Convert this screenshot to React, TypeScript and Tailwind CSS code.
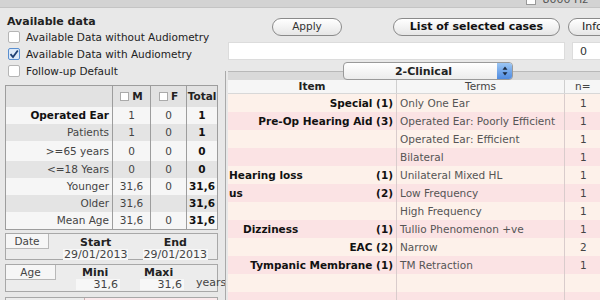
import React from "react";

const font = { fontFamily: '"DejaVu Sans", Verdana, sans-serif' };

function Check({ checked }: { checked?: boolean }) {
  return (
    <span
      className={`inline-flex w-[12px] h-[12px] rounded-[2px] border items-center justify-center shrink-0 ${
        checked ? "border-[#5a8fd0] bg-[#dce9f8]" : "border-[#b5b5b5] bg-white"
      }`}
    >
      {checked && (
        <svg width="10" height="10" viewBox="0 0 10 10">
          <path d="M1.5 5.2 L4 8 L8.8 1.5" fill="none" stroke="#1d3f73" strokeWidth="1.8" />
        </svg>
      )}
    </span>
  );
}

const stats = [
  { label: "Operated Ear", m: "1", f: "0", t: "1", bold: true, h: "h-[17px]" },
  { label: "Patients", m: "1", f: "0", t: "1", h: "h-[17px]" },
  { label: ">=65 years", m: "0", f: "0", t: "0", h: "h-[20px]" },
  { label: "<=18 Years", m: "0", f: "0", t: "0", h: "h-[17px]" },
  { label: "Younger", m: "31,6", f: "0", t: "31,6", h: "h-[17px]" },
  { label: "Older", m: "31,6", f: "", t: "31,6", h: "h-[17px]" },
  { label: "Mean Age", m: "31,6", f: "0", t: "31,6", h: "h-[17px]" },
];

type Row = { item: string; count?: string; mode?: "right" | "left" | "indent"; term: string; n: string };

const rows: Row[] = [
  { item: "Special", count: "(1)", mode: "right", term: "Only One Ear", n: "1" },
  { item: "Pre-Op Hearing Aid", count: "(3)", mode: "right", term: "Operated Ear: Poorly Efficient", n: "1" },
  { item: "", term: "Operated Ear: Efficient", n: "1" },
  { item: "", term: "Bilateral", n: "1" },
  { item: "Hearing loss", count: "(1)", mode: "left", term: "Unilateral Mixed HL", n: "1" },
  { item: "us", count: "(2)", mode: "left", term: "Low Frequency", n: "1" },
  { item: "", term: "High Frequency", n: "1" },
  { item: "Dizziness", count: "(1)", mode: "indent", term: "Tullio Phenomenon +ve", n: "1" },
  { item: "EAC", count: "(2)", mode: "right", term: "Narrow", n: "2" },
  { item: "Tympanic Membrane", count: "(1)", mode: "right", term: "TM Retraction", n: "1" },
  { item: "", term: "", n: "" },
  { item: "", term: "", n: "" },
];

const pill = "shrink-0 h-[18px] rounded-full border border-[#8a8a8a] bg-gradient-to-b from-white to-[#e6e6e6] shadow-[inset_0_1px_0_#fff] flex items-center";

export default function App() {
  return (
    <div className="w-[600px] h-[300px] overflow-hidden bg-[#e8e8e8] text-[10.5px] text-[#222] leading-none" style={font}>
      <div className="h-[8px] bg-[#d3d3d3] border-b border-[#c4c4c4] flex justify-end overflow-hidden pr-[12px]">
        <div className="flex items-start gap-[6px] text-[11px] text-[#555] mt-[-6px]">
          <span className="w-[10px] h-[10px] border border-[#999] bg-white mt-[1px]" />
          <span>8000 Hz</span>
        </div>
      </div>
      <div className="flex">
        {/* left column */}
        <div className="w-[222px] shrink-0 pl-[5px] pr-[4px]">
          <div className="font-bold text-[11px] pl-[2px] mt-[6px] h-[14px] flex items-center">Available data</div>
          <div className="flex flex-col gap-[5px] pl-[3px] mt-[3px]">
            <label className="flex items-center gap-[6px] h-[12px]"><Check />Available Data without Audiometry</label>
            <label className="flex items-center gap-[6px] h-[12px]"><Check checked />Available Data with Audiometry</label>
            <label className="flex items-center gap-[6px] h-[12px]"><Check />Follow-up Default</label>
          </div>

          <div className="mt-[8px] border border-[#9d9d9d] bg-white">
            <div className="grid grid-cols-[107px_38px_36px_1fr] h-[21px] bg-[#e2e2e2] font-bold items-center">
              <div className="h-full border-r border-[#9d9d9d]" />
              <div className="h-full border-r border-[#9d9d9d] flex items-center justify-center gap-[3px]"><span className="w-[9px] h-[9px] border border-[#aaa] bg-white" />M</div>
              <div className="h-full border-r border-[#9d9d9d] flex items-center justify-center gap-[3px]"><span className="w-[9px] h-[9px] border border-[#aaa] bg-white" />F</div>
              <div className="text-center">Total</div>
            </div>
            {stats.map((s, i) => (
              <div key={s.label} className={`grid grid-cols-[107px_38px_36px_1fr] ${s.h} items-center ${i % 2 ? "bg-[#e4e4e4]" : "bg-[#f6f6f6]"}`}>
                <div className={`h-full border-r border-[#9d9d9d] flex items-center justify-end pr-[3px] ${s.bold ? "font-bold text-[#111]" : "text-[#444]"}`}>{s.label}</div>
                <div className="h-full border-r border-[#9d9d9d] flex items-center justify-center text-[#444]">{s.m}</div>
                <div className="h-full border-r border-[#9d9d9d] flex items-center justify-center text-[#444]">{s.f}</div>
                <div className="text-center font-bold text-[#111]">{s.t}</div>
              </div>
            ))}
          </div>

          <div className="mt-[3px] border border-[#a8a8a8] bg-[#ececec] h-[27px] flex">
            <div className="w-[50px] shrink-0 flex flex-col">
              <div className="w-[43px] h-[15px] bg-[#f6f6f6] border-r border-b border-[#b8b8b8] flex items-center justify-center text-[#444]">Date</div>
            </div>
            <div className="flex-1 grid grid-cols-2 pt-[3px] pr-[2px]">
              <div className="flex flex-col items-center gap-[1px]">
                <span className="font-bold text-[11px]">Start</span>
                <span className="text-[#444] text-[11px] bg-[#f7f7f7] px-[1px]">29/01/2013</span>
              </div>
              <div className="flex flex-col items-center gap-[1px]">
                <span className="font-bold text-[11px]">End</span>
                <span className="text-[#444] text-[11px] bg-[#f7f7f7] px-[1px]">29/01/2013</span>
              </div>
            </div>
          </div>

          <div className="mt-[4px] border border-[#a8a8a8] bg-[#ececec] h-[28px] flex">
            <div className="w-[50px] shrink-0 flex flex-col">
              <div className="h-[15px] bg-[#f6f6f6] border-r border-b border-[#b8b8b8] flex items-center justify-center text-[#444]">Age</div>
            </div>
            <div className="flex-1 flex pt-[2px] text-[11px]">
              <div className="w-[70px] flex flex-col items-end pr-[6px] gap-[1px]">
                <span className="font-bold self-start pl-[26px]">Mini</span>
                <span className="text-[#444] bg-[#f7f7f7] pl-[18px] pr-[2px]">31,6</span>
              </div>
              <div className="w-[60px] flex flex-col items-end pr-[2px] gap-[1px]">
                <span className="font-bold self-start pl-[18px]">Maxi</span>
                <span className="text-[#444] bg-[#f7f7f7] pl-[18px] pr-[2px]">31,6</span>
              </div>
              <div className="flex items-end pb-[3px] pl-[10px] text-[#444]">years</div>
            </div>
          </div>

          <div className="mt-[5px] border border-[#a8a8a8] bg-[#ececec] h-[20px] flex">
            <div className="w-[78px]" />
            <div className="flex-1 bg-[#fbe9ec] border-l border-[#c8b0b0]" />
          </div>
        </div>

        {/* right column */}
        <div className="flex-1 min-w-0 overflow-hidden">
          <div className="flex items-center h-[34px] pt-[3px] whitespace-nowrap">
            <div className={`${pill} ml-[50px] w-[70px] justify-center text-[#333]`}>Apply</div>
            <div className={`${pill} ml-[51px] w-[167px] justify-center font-bold text-[#111] text-[11px]`}>List of selected cases</div>
            <div className={`${pill} ml-[8px] w-[60px] text-[11px] pl-[13px]`}>Info</div>
          </div>
          <div className="flex items-center gap-[7px] pl-[6px]">
            <div className="shrink-0 w-[337px] h-[18px] bg-white border border-[#dcdcdc]" />
            <div className="shrink-0 w-[40px] h-[18px] bg-white border border-[#dcdcdc] text-[11px] text-[#333] flex items-center pl-[7px]">0</div>
          </div>

          <div className="relative mt-[2px] ml-[3px]">
            <div className="absolute left-[118px] top-0 w-[170px] h-[18px] z-10 rounded-[4px] border border-[#9a9a9a] bg-gradient-to-b from-white to-[#ececec] flex items-center">
              <span className="flex-1 text-center font-bold text-[11px] pl-[6px]">2-Clinical</span>
              <span className="w-[15px] h-full rounded-r-[3px] bg-gradient-to-b from-[#9cc6f3] to-[#4f8be0] flex items-center justify-center">
                <svg width="6" height="10" viewBox="0 0 6 10"><path d="M3 0.5 L5.5 3.8 H0.5Z M3 9.5 L5.5 6.2 H0.5Z" fill="#1a2a40" /></svg>
              </span>
            </div>
            <div className="pt-[9px]">
              <div className="border-l border-[#a9a9a9]">
                <div className="h-[9px] bg-[#d9d9d9] border-t border-[#b8b8b8] ml-[2px]" />
                <div className="ml-[2px]">
                  <div className="grid grid-cols-[169px_168px_1fr] h-[14px] bg-[#f6f6f6] border-b border-[#d8d8d8] items-center">
                    <div className="font-bold border-r border-[#cfcfcf] h-full flex items-center justify-center">Item</div>
                    <div className="text-[#444] border-r border-[#cfcfcf] h-full flex items-center justify-center">Terms</div>
                    <div className="text-[#444] pl-[10px]">n=</div>
                  </div>
                  {rows.map((r, i) => (
                    <div key={i} className={`grid grid-cols-[169px_168px_1fr] h-[18px] items-center ${i % 2 ? "bg-[#fbe3e4]" : "bg-[#fdf1ea]"}`}>
                      <div className="h-full border-r border-[#d9cccc] flex items-center font-bold text-[#111] whitespace-nowrap pr-[3px]">
                        {r.mode === "right" && <span className="ml-auto">{r.item} {r.count}</span>}
                        {r.mode === "left" && (<><span className="pl-[1px]">{r.item}</span><span className="ml-auto">{r.count}</span></>)}
                        {r.mode === "indent" && (<><span className="pl-[15px]">{r.item}</span><span className="ml-auto">{r.count}</span></>)}
                      </div>
                      <div className="h-full border-r border-[#d9cccc] flex items-center pl-[3px] text-[#555] whitespace-nowrap">{r.term}</div>
                      <div className="pl-[15px] text-[#444]">{r.n}</div>
                    </div>
                  ))}
                </div>
              </div>
            </div>
          </div>
        </div>
      </div>
    </div>
  );
}
